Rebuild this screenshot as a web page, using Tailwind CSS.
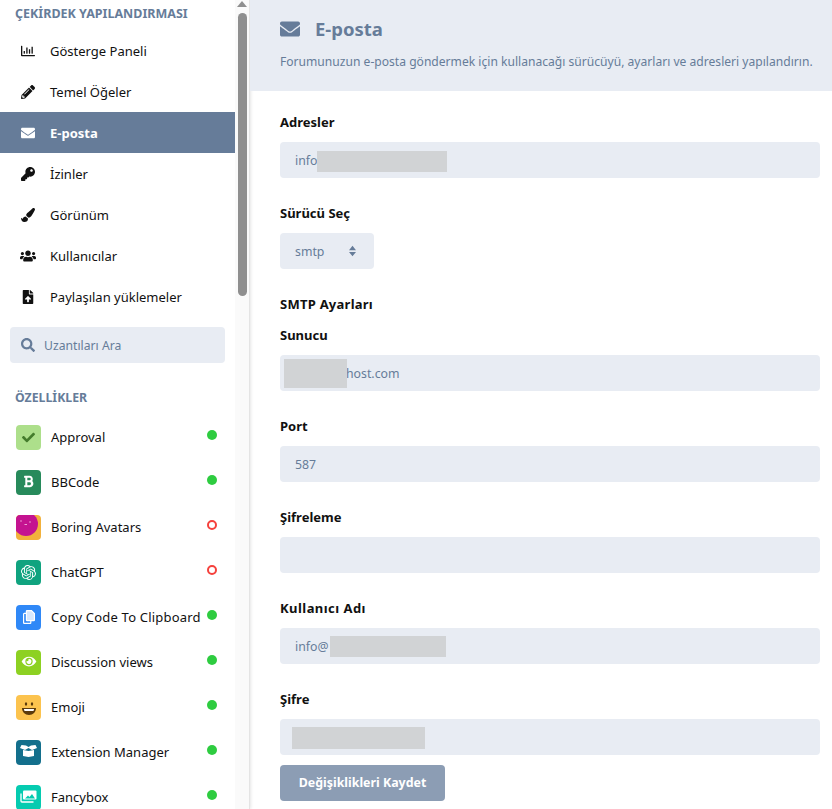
<!DOCTYPE html>
<html lang="tr">
<head>
<meta charset="utf-8">
<script src="https://cdn.jsdelivr.net/npm/@tailwindcss/browser@4"></script>
<title>E-posta</title>
</head>
<body class="bg-white font-['Noto_Sans',sans-serif] text-[13px] text-[#111111] overflow-hidden">
<div class="flex h-[809px] w-[832px] overflow-hidden">
  <aside class="flex h-full w-[250px] shrink-0 overflow-hidden border-r border-[#e4e4e4] shadow-[1px_0_3px_rgba(0,0,0,0.1)]">
    <nav class="w-[235px] shrink-0 overflow-hidden">
      <h3 class="pl-[15px] h-[30px] pt-[4px] font-bold text-[12.5px] leading-[20px] text-[#667c99]">ÇEKİRDEK YAPILANDIRMASI</h3>
      <ul class="[&_span]:pt-[2px]">
        <li class="flex h-[41px] items-center pl-[20px]"><svg class="w-[16px] h-[14px] mr-[14px]" viewBox="0 0 512 512" fill="#111"><path d="M396.8 352h22.4c6.4 0 12.8-6.4 12.8-12.8V108.8c0-6.4-6.4-12.8-12.8-12.8h-22.4c-6.4 0-12.8 6.4-12.8 12.8v230.4c0 6.4 6.4 12.8 12.8 12.8zm-192 0h22.4c6.4 0 12.8-6.4 12.8-12.8V140.8c0-6.4-6.4-12.8-12.8-12.8h-22.4c-6.4 0-12.8 6.4-12.8 12.8v198.4c0 6.4 6.4 12.8 12.8 12.8zm96 0h22.4c6.4 0 12.8-6.4 12.8-12.8V204.8c0-6.4-6.4-12.8-12.8-12.8h-22.4c-6.4 0-12.8 6.4-12.8 12.8v134.4c0 6.4 6.4 12.8 12.8 12.8zM496 400H48V80c0-8.84-7.16-16-16-16H16C7.16 64 0 71.16 0 80v336c0 17.67 14.33 32 32 32h464c8.84 0 16-7.16 16-16v-16c0-8.84-7.16-16-16-16zm-387.2-48h22.4c6.4 0 12.8-6.4 12.8-12.8v-70.4c0-6.4-6.4-12.8-12.8-12.8h-22.4c-6.4 0-12.8 6.4-12.8 12.8v70.4c0 6.4 6.4 12.8 12.8 12.8z"/></svg><span>Gösterge Paneli</span></li>
        <li class="flex h-[41px] items-center pl-[20px]"><svg class="w-[16px] h-[14px] mr-[14px]" viewBox="0 0 512 512" fill="#111"><path d="M497.9 142.1l-46.1 46.1c-4.7 4.7-12.3 4.7-17 0l-111-111c-4.7-4.7-4.7-12.3 0-17l46.1-46.1c18.7-18.7 49.1-18.7 67.9 0l60.1 60.1c18.8 18.7 18.8 49.1 0 67.9zM284.2 99.8L21.6 362.4.4 483.9c-2.9 16.4 11.4 30.6 27.8 27.8l121.5-21.3 262.6-262.6c4.7-4.7 4.7-12.3 0-17l-111-111c-4.8-4.7-12.4-4.7-17.1 0zM124.1 339.9c-5.5-5.5-5.5-14.3 0-19.8l154-154c5.5-5.5 14.3-5.5 19.8 0s5.5 14.3 0 19.8l-154 154c-5.5 5.5-14.3 5.5-19.8 0zM88 424h48v36.3l-64.5 11.3-31.1-31.1L51.7 376H88v48z"/></svg><span>Temel Öğeler</span></li>
        <li class="flex h-[41px] items-center pl-[20px] bg-[#667c99] text-white font-bold"><svg class="w-[16px] h-[14px] mr-[14px]" viewBox="0 0 512 512" fill="#fff"><path d="M502.3 190.8c3.9-3.1 9.7-.2 9.7 4.7V400c0 26.5-21.5 48-48 48H48c-26.5 0-48-21.5-48-48V195.6c0-5 5.7-7.8 9.7-4.7 22.4 17.4 52.1 39.5 154.1 113.6 21.1 15.4 56.7 47.8 92.2 47.6 35.7.3 72-32.8 92.3-47.6 102-74.1 131.6-96.3 154-113.7zM256 320c23.2.4 56.6-29.2 73.4-41.4 132.7-96.3 142.8-104.7 173.4-128.7 5.8-4.5 9.2-11.5 9.2-18.9v-19c0-26.5-21.5-48-48-48H48C21.5 64 0 85.5 0 112v19c0 7.4 3.4 14.3 9.2 18.9 30.6 23.9 40.7 32.4 173.4 128.7 16.8 12.2 50.2 41.8 73.4 41.4z"/></svg><span>E-posta</span></li>
        <li class="flex h-[41px] items-center pl-[20px]"><svg class="w-[16px] h-[14px] mr-[14px]" viewBox="0 0 512 512" fill="#111"><path d="M512 176.001C512 273.203 433.202 352 336 352c-11.22 0-22.19-1.062-32.827-3.069l-24.012 27.014A23.999 23.999 0 0 1 261.223 384H224v40c0 13.255-10.745 24-24 24h-40v40c0 13.255-10.745 24-24 24H24c-13.255 0-24-10.745-24-24v-78.059c0-6.365 2.529-12.47 7.029-16.971l161.802-161.802C163.108 213.814 160 195.271 160 176 160 78.798 238.797.001 335.999 0 433.488-.001 512 78.511 512 176.001zM336 128c0 26.51 21.49 48 48 48s48-21.49 48-48-21.49-48-48-48-48 21.49-48 48z"/></svg><span>İzinler</span></li>
        <li class="flex h-[41px] items-center pl-[20px]"><svg class="w-[16px] h-[14px] mr-[14px]" viewBox="0 0 512 512" fill="#111"><path d="M167.02 309.34c-40.12 2.58-76.53 17.86-97.19 72.3-2.35 6.21-8 9.98-14.59 9.98-11.11 0-45.46-27.67-55.25-34.35C0 439.62 37.93 512 128 512c75.86 0 128-43.77 128-120.19 0-3.11-.65-6.08-.97-9.13l-88.01-73.34zM457.89 0c-15.16 0-29.37 6.71-40.21 16.45C213.27 199.05 192 203.34 192 257.09c0 13.7 3.25 26.76 8.73 38.7l63.82 53.18c7.21 1.8 14.64 3.03 22.39 3.03 62.11 0 98.11-45.47 211.16-256.46 7.38-14.35 13.9-29.85 13.9-45.99C512 20.64 486 0 457.89 0z"/></svg><span>Görünüm</span></li>
        <li class="flex h-[41px] items-center pl-[20px]"><svg class="w-[16px] h-[14px] mr-[14px]" viewBox="0 0 640 512" fill="#111"><path d="M96 224c35.3 0 64-28.7 64-64s-28.7-64-64-64-64 28.7-64 64 28.7 64 64 64zm448 0c35.3 0 64-28.7 64-64s-28.7-64-64-64-64 28.7-64 64 28.7 64 64 64zm32 32h-64c-17.6 0-33.5 7.1-45.1 18.6 40.3 22.1 68.9 62 75.1 109.4h66c17.7 0 32-14.3 32-32v-32c0-35.3-28.7-64-64-64zm-256 0c61.9 0 112-50.1 112-112S381.9 32 320 32 208 82.1 208 144s50.1 112 112 112zm76.8 32h-8.3c-20.8 10-43.9 16-68.5 16s-47.6-6-68.5-16h-8.3C179.6 288 128 339.6 128 403.2V432c0 26.5 21.5 48 48 48h288c26.5 0 48-21.5 48-48v-28.8c0-63.6-51.6-115.2-115.2-115.2zm-223.7-13.4C161.5 263.1 145.6 256 128 256H64c-35.3 0-64 28.7-64 64v32c0 17.7 14.3 32 32 32h65.9c6.3-47.4 34.9-87.3 75.2-109.4z"/></svg><span>Kullanıcılar</span></li>
        <li class="flex h-[41px] items-center pl-[20px]"><svg class="w-[16px] h-[14px] mr-[14px]" viewBox="0 0 384 512" fill="#111"><path d="M224 136V0H24C10.7 0 0 10.7 0 24v464c0 13.3 10.7 24 24 24h336c13.3 0 24-10.7 24-24V160H248c-13.2 0-24-10.8-24-24zm65.18 215.01H224v80c0 8.84-7.16 16-16 16h-32c-8.84 0-16-7.16-16-16v-80H94.82c-14.28 0-21.41-17.29-11.27-27.36l96.42-95.7c6.65-6.61 17.39-6.61 24.04 0l96.42 95.7c10.15 10.07 3.03 27.36-11.25 27.36zM377 105L279.1 7c-4.5-4.5-10.6-7-17-7H256v128h128v-6.1c0-6.3-2.5-12.4-7-16.9z"/></svg><span>Paylaşılan yüklemeler</span></li>
      </ul>
      <div class="mx-[10px] mt-[10px] flex h-[36px] items-center rounded-[4px] bg-[#e8ecf3] pl-[11px] text-[12.2px] text-[#667c99]">
        <svg class="mr-[9px] h-[14px] w-[14px]" viewBox="0 0 512 512" fill="#667c99"><path d="M505 442.7L405.3 343c-4.5-4.5-10.6-7-17-7H372c27.6-35.3 44-79.7 44-128C416 93.1 322.9 0 208 0S0 93.1 0 208s93.1 208 208 208c48.3 0 92.7-16.4 128-44v16.3c0 6.4 2.5 12.5 7 17l99.7 99.7c9.4 9.4 24.6 9.4 33.9 0l28.3-28.3c9.4-9.4 9.4-24.6.1-34zM208 336c-70.7 0-128-57.2-128-128 0-70.7 57.2-128 128-128 70.7 0 128 57.2 128 128 0 70.7-57.2 128-128 128z"/></svg>
        <span class="pt-[2px]">Uzantıları Ara</span>
      </div>
      <h3 class="mt-[25px] pl-[15px] h-[27px] font-bold text-[12.3px] leading-[20px] text-[#667c99]">ÖZELLİKLER</h3>
      <ul>
        <li class="relative flex h-[45px] items-center pl-[16px]">
          <span class="mr-[10px] flex h-[25px] w-[25px] items-center justify-center rounded-[4px] bg-[#addf8b]"><svg class="h-[13px] w-[13px]" viewBox="0 0 512 512" fill="#447c2c"><path d="M173.898 439.404l-166.4-166.4c-9.997-9.997-9.997-26.206 0-36.204l36.203-36.204c9.997-9.998 26.207-9.998 36.204 0L192 312.69 432.095 72.596c9.997-9.997 26.207-9.997 36.204 0l36.203 36.204c9.997 9.997 9.997 26.206 0 36.204l-294.4 294.401c-9.998 9.997-26.207 9.997-36.204-.001z"/></svg></span>
          <span>Approval</span>
          <span class="absolute left-[207px] top-[15px] h-[10px] w-[10px] rounded-full bg-[#2ecc40]"></span>
        </li>
        <li class="relative flex h-[45px] items-center pl-[16px]">
          <span class="mr-[10px] flex h-[25px] w-[25px] items-center justify-center rounded-[4px] bg-[#278a5b]"><svg class="h-[13px] w-[11px] -mt-[3px]" viewBox="0 0 384 512" fill="#fff"><path d="M333.49 238a122 122 0 0 0 27-65.21C367.87 96.49 308 32 233.42 32H34a16 16 0 0 0-16 16v48a16 16 0 0 0 16 16h31.87v288H34a16 16 0 0 0-16 16v48a16 16 0 0 0 16 16h209.32c70.8 0 134.14-51.75 141-122.4 4.74-48.45-16.39-92.06-50.83-119.6zM145.66 112h87.76a48 48 0 0 1 0 96h-87.76zm87.76 288h-87.76V288h87.76a56 56 0 0 1 0 112z"/></svg></span>
          <span>BBCode</span>
          <span class="absolute left-[207px] top-[15px] h-[10px] w-[10px] rounded-full bg-[#2ecc40]"></span>
        </li>
        <li class="relative flex h-[45px] items-center pl-[16px]">
          <span class="mr-[10px] h-[25px] w-[25px] overflow-hidden rounded-[4px] bg-[#f2b13c]"><svg class="h-[25px] w-[25px]" viewBox="0 0 25 25"><circle cx="10" cy="9" r="12" fill="#c41390"/><circle cx="5" cy="6" r=".7" fill="#f7c8e6"/><circle cx="14" cy="7" r=".7" fill="#f7c8e6"/><path d="M8.500 9.500h2.500" stroke="#f7c8e6" stroke-width=".8"/></svg></span>
          <span>Boring Avatars</span>
          <span class="absolute left-[207px] top-[15px] h-[10px] w-[10px] rounded-full border-2 border-[#f5413c]"></span>
        </li>
        <li class="relative flex h-[45px] items-center pl-[16px]">
          <span class="mr-[10px] flex h-[25px] w-[25px] items-center justify-center rounded-[4px] bg-[#10a37f]"><svg class="h-[15px] w-[15px]" viewBox="0 0 24 24" fill="#fff"><path d="M22.2819 9.8211a5.9847 5.9847 0 0 0-.5157-4.9108 6.0462 6.0462 0 0 0-6.5098-2.9A6.0651 6.0651 0 0 0 4.9807 4.1818a5.9847 5.9847 0 0 0-3.9977 2.9 6.0462 6.0462 0 0 0 .7427 7.0966 5.98 5.98 0 0 0 .511 4.9107 6.051 6.051 0 0 0 6.5146 2.9001A5.9847 5.9847 0 0 0 13.2599 24a6.0557 6.0557 0 0 0 5.7718-4.2058 5.9894 5.9894 0 0 0 3.9977-2.9001 6.0557 6.0557 0 0 0-.7475-7.0729zm-9.022 12.6081a4.4755 4.4755 0 0 1-2.8764-1.0408l.1419-.0804 4.7783-2.7582a.7948.7948 0 0 0 .3927-.6813v-6.7369l2.02 1.1686a.071.071 0 0 1 .038.052v5.5826a4.504 4.504 0 0 1-4.4945 4.4944zm-9.6607-4.1254a4.4708 4.4708 0 0 1-.5346-3.0137l.142.0852 4.783 2.7582a.7712.7712 0 0 0 .7806 0l5.8428-3.3685v2.3324a.0804.0804 0 0 1-.0332.0615L9.74 19.9502a4.4992 4.4992 0 0 1-6.1408-1.6464zM2.3408 7.8956a4.485 4.485 0 0 1 2.3655-1.9728V11.6a.7664.7664 0 0 0 .3879.6765l5.8144 3.3543-2.0201 1.1685a.0757.0757 0 0 1-.071 0l-4.8303-2.7865A4.504 4.504 0 0 1 2.3408 7.872zm16.5963 3.8558L13.1038 8.364 15.1192 7.2a.0757.0757 0 0 1 .071 0l4.8303 2.7913a4.4944 4.4944 0 0 1-.6765 8.1042v-5.6772a.79.79 0 0 0-.407-.667zm2.0107-3.0231l-.142-.0852-4.7735-2.7818a.7759.7759 0 0 0-.7854 0L9.409 9.2297V6.8974a.0662.0662 0 0 1 .0284-.0615l4.8303-2.7866a4.4992 4.4992 0 0 1 6.6802 4.66zM8.3065 12.863l-2.02-1.1638a.0804.0804 0 0 1-.038-.0567V6.0742a4.4992 4.4992 0 0 1 7.3757-3.4537l-.142.0805L8.704 5.459a.7948.7948 0 0 0-.3927.6813zm1.0976-2.3654l2.602-1.4998 2.6069 1.4998v2.9994l-2.5974 1.4997-2.6067-1.4997Z"/></svg></span>
          <span>ChatGPT</span>
          <span class="absolute left-[207px] top-[15px] h-[10px] w-[10px] rounded-full border-2 border-[#f5413c]"></span>
        </li>
        <li class="relative flex h-[45px] items-center pl-[16px]">
          <span class="mr-[10px] flex h-[25px] w-[25px] items-center justify-center rounded-[4px] bg-[#2f88f7]"><svg class="h-[14px] w-[12px] -mt-[2px]" viewBox="0 0 12 14" fill="none" stroke="#fff" stroke-width="1.2"><path d="M4 .6h4.500L11.400 3.500V10a.6.6 0 0 1-.6.6H4a.6.6 0 0 1-.6-.6V1.200A.6.6 0 0 1 4 .6z" fill="#d8e8fd"/><path d="M3.400 3.400H1.200a.6.6 0 0 0-.6.6v8.800a.6.6 0 0 0 .6.6h6a.6.6 0 0 0 .6-.6v-2.200"/></svg></span>
          <span class="tracking-[0.2px]">Copy Code To Clipboard</span>
          <span class="absolute left-[207px] top-[15px] h-[10px] w-[10px] rounded-full bg-[#2ecc40]"></span>
        </li>
        <li class="relative flex h-[45px] items-center pl-[16px]">
          <span class="mr-[10px] flex h-[25px] w-[25px] items-center justify-center rounded-[4px] bg-[#8dd122]"><svg class="h-[13px] w-[16px] -mt-[3px]" viewBox="0 0 576 512" fill="#fff"><path d="M572.52 241.4C518.29 135.59 410.93 64 288 64S57.68 135.64 3.48 241.41a32.35 32.35 0 0 0 0 29.19C57.71 376.41 165.07 448 288 448s230.32-71.64 284.52-177.41a32.35 32.35 0 0 0 0-29.19zM288 400a144 144 0 1 1 144-144 143.93 143.93 0 0 1-144 144zm0-240a95.31 95.31 0 0 0-25.31 3.79 47.85 47.85 0 0 1-66.9 66.9A95.78 95.78 0 1 0 288 160z"/></svg></span>
          <span>Discussion views</span>
          <span class="absolute left-[207px] top-[15px] h-[10px] w-[10px] rounded-full bg-[#2ecc40]"></span>
        </li>
        <li class="relative flex h-[45px] items-center pl-[16px]">
          <span class="mr-[10px] flex h-[25px] w-[25px] items-center justify-center rounded-[4px] bg-[#fcc34e]"><svg class="h-[16px] w-[16px]" viewBox="0 0 16 16"><ellipse cx="5" cy="4" rx="1.200" ry="1.800" fill="#5c3b0c"/><ellipse cx="11" cy="4" rx="1.200" ry="1.800" fill="#5c3b0c"/><path d="M1 8h14c0 4-3 7-7 7s-7-3-7-7z" fill="#5c3b0c"/><path d="M3 9h10c0 1-.3 1.500-.6 2H3.600C3.300 10.500 3 10 3 9z" fill="#fff"/></svg></span>
          <span>Emoji</span>
          <span class="absolute left-[207px] top-[15px] h-[10px] w-[10px] rounded-full bg-[#2ecc40]"></span>
        </li>
        <li class="relative flex h-[45px] items-center pl-[16px]">
          <span class="mr-[10px] flex h-[25px] w-[25px] items-center justify-center rounded-[4px] bg-[#136f8c]"><svg class="h-[12px] w-[17px] -mt-[4px]" viewBox="0 0 17 12" fill="#fff"><path d="M3 5l5.500 1L14 5v6l-5.500 1L3 11z"/><path d="M0 3l1.500-3L6 .5 8.500 2 11 .5 15.500 0 17 3l-5 2-3.500-2L5 5z"/></svg></span>
          <span>Extension Manager</span>
          <span class="absolute left-[207px] top-[15px] h-[10px] w-[10px] rounded-full bg-[#2ecc40]"></span>
        </li>
        <li class="relative flex h-[45px] items-center pl-[16px]">
          <span class="mr-[10px] flex h-[25px] w-[25px] items-center justify-center rounded-[4px] bg-[#05cbb0]"><svg class="h-[13px] w-[17px] -mt-[3px]" viewBox="0 0 17 13" fill="none"><rect x="3" y=".6" width="13.500" height="9" rx="1" fill="#fff"/><path d="M5 8.500l3-3 1.500 1.500 2.500-3 3 4.500z" fill="#05cbb0"/><path d="M1 3.500v7.500a1 1 0 0 0 1 1h11.500" stroke="#fff" stroke-width="1.300"/></svg></span>
          <span>Fancybox</span>
          <span class="absolute left-[207px] top-[15px] h-[10px] w-[10px] rounded-full bg-[#2ecc40]"></span>
        </li>
      </ul>
    </nav>
    <div class="flex w-[14px] shrink-0 flex-col items-center bg-[#fafafa]">
      <span class="mt-[1px] h-0 w-0 border-x-[5px] border-b-[6px] border-x-transparent border-b-[#8f8f8f]"></span>
      <span class="mt-[6px] h-[283px] w-[9px] rounded-full bg-[#8f8f8f]"></span>
    </div>
  </aside>
  <main class="min-w-0 flex-1">
    <header class="h-[91px] bg-[#e8ecf3] pl-[30px] pt-[17px] text-[#667c99]">
      <h2 class="flex h-[24px] items-center text-[18.5px] font-bold leading-[24px]">
        <svg class="mr-[15px] h-[20px] w-[20px]" viewBox="0 0 512 512" fill="#667c99"><path d="M502.3 190.8c3.9-3.1 9.7-.2 9.7 4.7V400c0 26.5-21.5 48-48 48H48c-26.5 0-48-21.5-48-48V195.6c0-5 5.7-7.8 9.7-4.7 22.4 17.4 52.1 39.5 154.1 113.6 21.1 15.4 56.7 47.8 92.2 47.6 35.7.3 72-32.8 92.3-47.6 102-74.1 131.6-96.3 154-113.7zM256 320c23.2.4 56.6-29.2 73.4-41.4 132.7-96.3 142.8-104.7 173.4-128.7 5.8-4.5 9.2-11.5 9.2-18.9v-19c0-26.5-21.5-48-48-48H48C21.5 64 0 85.5 0 112v19c0 7.4 3.4 14.3 9.2 18.9 30.6 23.9 40.7 32.4 173.4 128.7 16.8 12.2 50.2 41.8 73.4 41.4z"/></svg>
        <span>E-posta</span>
      </h2>
      <p class="mt-[11px] text-[12.1px] leading-[20px] whitespace-nowrap">Forumunuzun e-posta göndermek için kullanacağı sürücüyü, ayarları ve adresleri yapılandırın.</p>
    </header>
    <form class="pl-[30px] pr-[12px] pt-[21px]">
      <div class="h-[91px]">
        <label class="mb-[10px] block font-bold leading-[20px]">Adresler</label>
        <div class="relative flex h-[36px] items-center rounded-[4px] bg-[#e8ecf3] pl-[15px] text-[12.3px] text-[#667c99]"><span class="pt-[2px]">info</span><span class="absolute left-[37px] top-[9px] h-[21px] w-[130px] bg-[#d1d3d5]"></span></div>
      </div>
      <div class="h-[91px]">
        <label class="mb-[10px] block font-bold leading-[20px]">Sürücü Seç</label>
        <div class="relative flex h-[36px] w-[94px] items-center rounded-[4px] bg-[#e8ecf3] pl-[15px] text-[12.3px] text-[#667c99]"><span class="pt-[2px]">smtp</span><svg class="absolute right-[18px] top-[12px] h-[12px] w-[7px]" viewBox="0 0 8 12" fill="#667c99"><path d="M4 0l4 5H0zM4 12l4-5H0z"/></svg></div>
      </div>
      <h4 class="mb-[11px] font-bold leading-[20px] tracking-[0.25px]">SMTP Ayarları</h4>
      <div class="h-[91px]">
        <label class="mb-[10px] block font-bold leading-[20px]">Sunucu</label>
        <div class="relative flex h-[36px] items-center rounded-[4px] bg-[#e8ecf3] pl-[15px] text-[12.3px] text-[#667c99]"><span class="pl-[51px] pt-[2px]">host.com</span><span class="absolute left-[4px] top-[4px] h-[29px] w-[63px] bg-[#d1d3d5]"></span></div>
      </div>
      <div class="h-[91px]">
        <label class="mb-[10px] block font-bold leading-[20px]">Port</label>
        <div class="flex h-[36px] items-center rounded-[4px] bg-[#e8ecf3] pl-[15px] text-[12.3px] text-[#667c99]"><span class="pt-[2px]">587</span></div>
      </div>
      <div class="h-[91px]">
        <label class="mb-[10px] block font-bold leading-[20px]">Şifreleme</label>
        <div class="h-[36px] rounded-[4px] bg-[#e8ecf3]"></div>
      </div>
      <div class="h-[91px]">
        <label class="mb-[10px] block font-bold leading-[20px] tracking-[0.45px]">Kullanıcı Adı</label>
        <div class="relative flex h-[36px] items-center rounded-[4px] bg-[#e8ecf3] pl-[15px] text-[12.3px] text-[#667c99]"><span class="pt-[2px]">info@</span><span class="absolute left-[50px] top-[8px] h-[21px] w-[116px] bg-[#d1d3d5]"></span></div>
      </div>
      <div>
        <label class="mb-[10px] block font-bold leading-[20px]">Şifre</label>
        <div class="relative h-[36px] rounded-[4px] bg-[#e8ecf3]"><span class="absolute left-[12px] top-[8px] h-[22px] w-[133px] bg-[#d1d3d5]"></span></div>
      </div>
      <button type="button" class="mt-[10px] h-[36px] w-[165px] rounded-[4px] bg-[#8c9db4] pt-[1px] text-[12.4px] font-bold text-white">Değişiklikleri Kaydet</button>
    </form>
  </main>
</div>
</body>
</html>
